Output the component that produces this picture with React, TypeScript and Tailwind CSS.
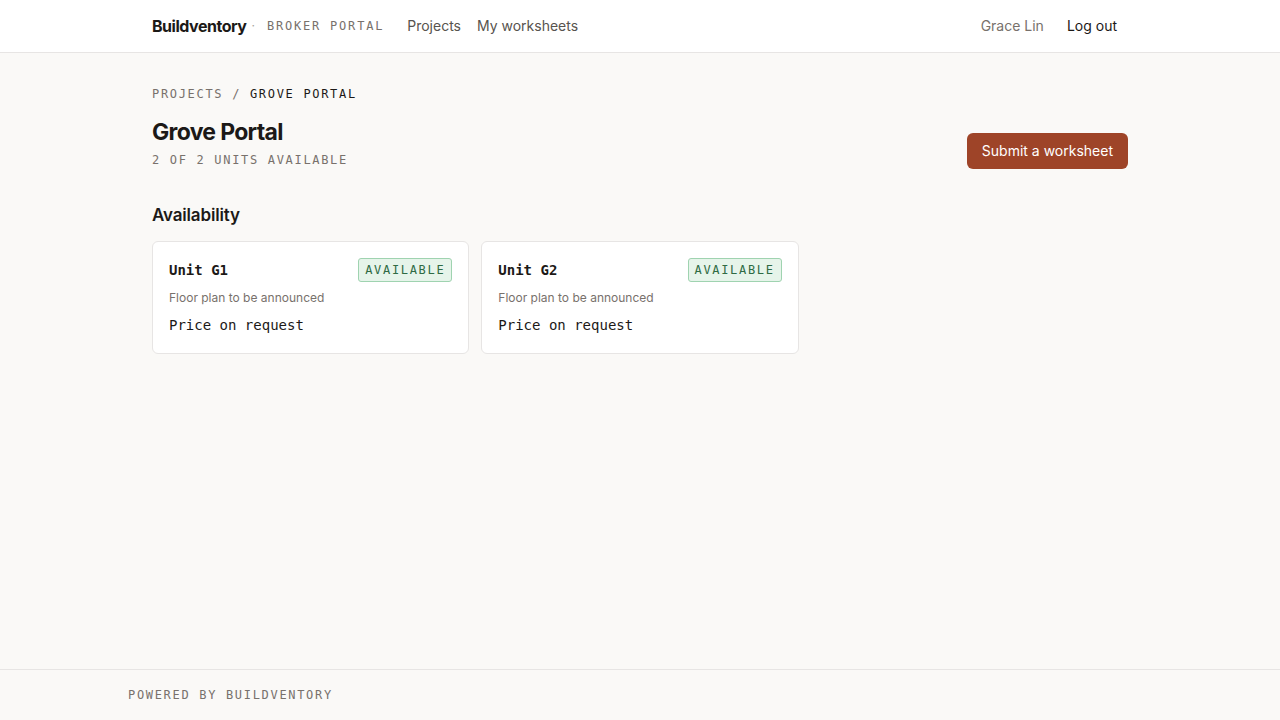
import React from 'react';

const units = [
  { id: 'G1', name: 'Unit G1' },
  { id: 'G2', name: 'Unit G2' },
];

const mono = "font-['DejaVu_Sans_Mono',monospace]";

export default function App() {
  return (
    <div className="min-h-screen flex flex-col bg-[#faf9f7] text-[#1c1917] font-['Inter',sans-serif]">
      {/* Header */}
      <header className="bg-white border-b border-[#e7e5e4]">
        <div className="max-w-[1024px] mx-auto px-6 h-[52px] flex items-center justify-between">
          <div className="flex items-center">
            <span className="text-base font-bold tracking-[-0.03em] text-[#1c1917]">Buildventory</span>
            <span className="text-[#a8a29e] text-xs ml-[5px] mr-[12px]">·</span>
            <span className={`${mono} text-xs tracking-[0.15em] text-[#78716c]`}>BROKER PORTAL</span>
            <nav className="flex items-center gap-4 ml-[23px] text-sm text-[#57534e]">
              <a>Projects</a>
              <a>My worksheets</a>
            </nav>
          </div>
          <div className="flex items-center gap-[23px] text-sm pr-[11px]">
            <span className="text-[#78716c]">Grace Lin</span>
            <button className="text-[#1c1917]">Log out</button>
          </div>
        </div>
      </header>

      {/* Main */}
      <main className="flex-1">
        <div className="max-w-[1024px] mx-auto px-6 pt-[33px]">
          <div className={`${mono} text-xs tracking-[0.14em] text-[#78716c]`}>
            PROJECTS / <span className="text-[#1c1917]">GROVE PORTAL</span>
          </div>

          <div className="flex items-start justify-between mt-[14px]">
            <div>
              <h1 className="text-[23px] font-bold tracking-[-0.03em] leading-8">Grove Portal</h1>
              <p className={`${mono} text-xs tracking-[0.14em] text-[#78716c] mt-[4px]`}>2 OF 2 UNITS AVAILABLE</p>
            </div>
            <button className="bg-[#9e4428] text-white text-sm rounded-md px-[15px] h-9 mt-[17px]">
              Submit a worksheet
            </button>
          </div>

          <h2 className="text-[17px] font-semibold tracking-[-0.01em] mt-[34px]">Availability</h2>

          <div className="grid grid-cols-3 gap-3 mt-[12px]">
            {units.map(u => (
              <div key={u.id} className="bg-white border border-[#e7e5e4] rounded-md px-4 pt-4 pb-[18px]">
                <div className="flex items-center justify-between">
                  <span className={`${mono} text-sm font-bold`}>{u.name}</span>
                  <span className={`${mono} text-xs tracking-[0.14em] text-[#2f6b44] bg-[#e6f4ea] border border-[#9fd3b0] rounded-[3px] px-1.5 h-6 flex items-center`}>
                    AVAILABLE
                  </span>
                </div>
                <p className="text-xs text-[#78716c] mt-[8px]">Floor plan to be announced</p>
                <p className={`${mono} text-sm mt-[9px]`}>Price on request</p>
              </div>
            ))}
          </div>
        </div>
      </main>

      {/* Footer */}
      <footer className="border-t border-[#e7e5e4] h-[51px] flex items-center">
        <div className={`max-w-[1024px] w-full mx-auto ${mono} text-xs tracking-[0.14em] text-[#78716c]`}>
          POWERED BY BUILDVENTORY
        </div>
      </footer>
    </div>
  );
}
